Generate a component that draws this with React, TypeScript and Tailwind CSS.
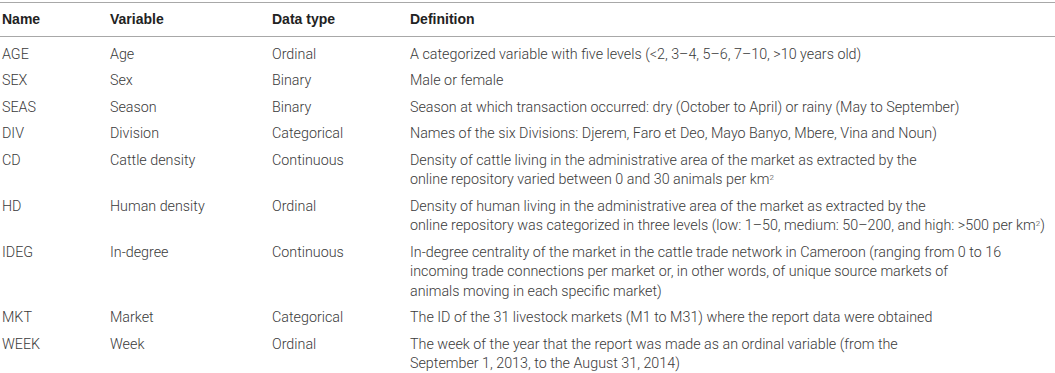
const rows: { name: string; variable: string; type: string; def: React.ReactNode }[] = [
  {
    name: "AGE",
    variable: "Age",
    type: "Ordinal",
    def: "A categorized variable with five levels (<2, 3–4, 5–6, 7–10, >10 years old)",
  },
  { name: "SEX", variable: "Sex", type: "Binary", def: "Male or female" },
  {
    name: "SEAS",
    variable: "Season",
    type: "Binary",
    def: "Season at which transaction occurred: dry (October to April) or rainy (May to September)",
  },
  {
    name: "DIV",
    variable: "Division",
    type: "Categorical",
    def: "Names of the six Divisions: Djerem, Faro et Deo, Mayo Banyo, Mbere, Vina and Noun)",
  },
  {
    name: "CD",
    variable: "Cattle density",
    type: "Continuous",
    def: (
      <>
        Density of cattle living in the administrative area of the market as extracted by the
        <br />
        online repository varied between 0 and 30 animals per km
        <sup className="text-[8px]">2</sup>
      </>
    ),
  },
  {
    name: "HD",
    variable: "Human density",
    type: "Ordinal",
    def: (
      <>
        Density of human living in the administrative area of the market as extracted by the
        <br />
        online repository was categorized in three levels (low: 1–50, medium: 50–200, and high: &gt;500 per km
        <sup className="text-[8px]">2</sup>)
      </>
    ),
  },
  {
    name: "IDEG",
    variable: "In-degree",
    type: "Continuous",
    def: (
      <>
        In-degree centrality of the market in the cattle trade network in Cameroon (ranging from 0 to 16
        <br />
        incoming trade connections per market or, in other words, of unique source markets of
        <br />
        animals moving in each specific market)
      </>
    ),
  },
  {
    name: "MKT",
    variable: "Market",
    type: "Categorical",
    def: "The ID of the 31 livestock markets (M1 to M31) where the report data were obtained",
  },
  {
    name: "WEEK",
    variable: "Week",
    type: "Ordinal",
    def: (
      <>
        The week of the year that the report was made as an ordinal variable (from the
        <br />
        September 1, 2013, to the August 31, 2014)
      </>
    ),
  },
];

const cols = "grid grid-cols-[108px_162px_138px_1fr] pl-[2px]";

export default function App() {
  return (
    <div className="h-[373px] w-[1055px] overflow-hidden bg-white font-['Roboto',sans-serif] text-[14.3px]">
      <div className="mt-[2px] border-t border-[#a8a8a8]">
        <div
          className={`${cols} h-[34px] items-center border-b border-[#a8a8a8] font-['Liberation_Sans',sans-serif] text-[14px] font-bold text-[#222]`}
        >
          <div>Name</div>
          <div>Variable</div>
          <div>Data type</div>
          <div>Definition</div>
        </div>
        <div className="pt-1 font-light leading-[19.5px] text-[#3a3a3a]">
          {rows.map((r) => (
            <div key={r.name} className={`${cols} py-[3.5px]`}>
              <div>{r.name}</div>
              <div>{r.variable}</div>
              <div>{r.type}</div>
              <div className="whitespace-nowrap">{r.def}</div>
            </div>
          ))}
        </div>
      </div>
    </div>
  );
}
